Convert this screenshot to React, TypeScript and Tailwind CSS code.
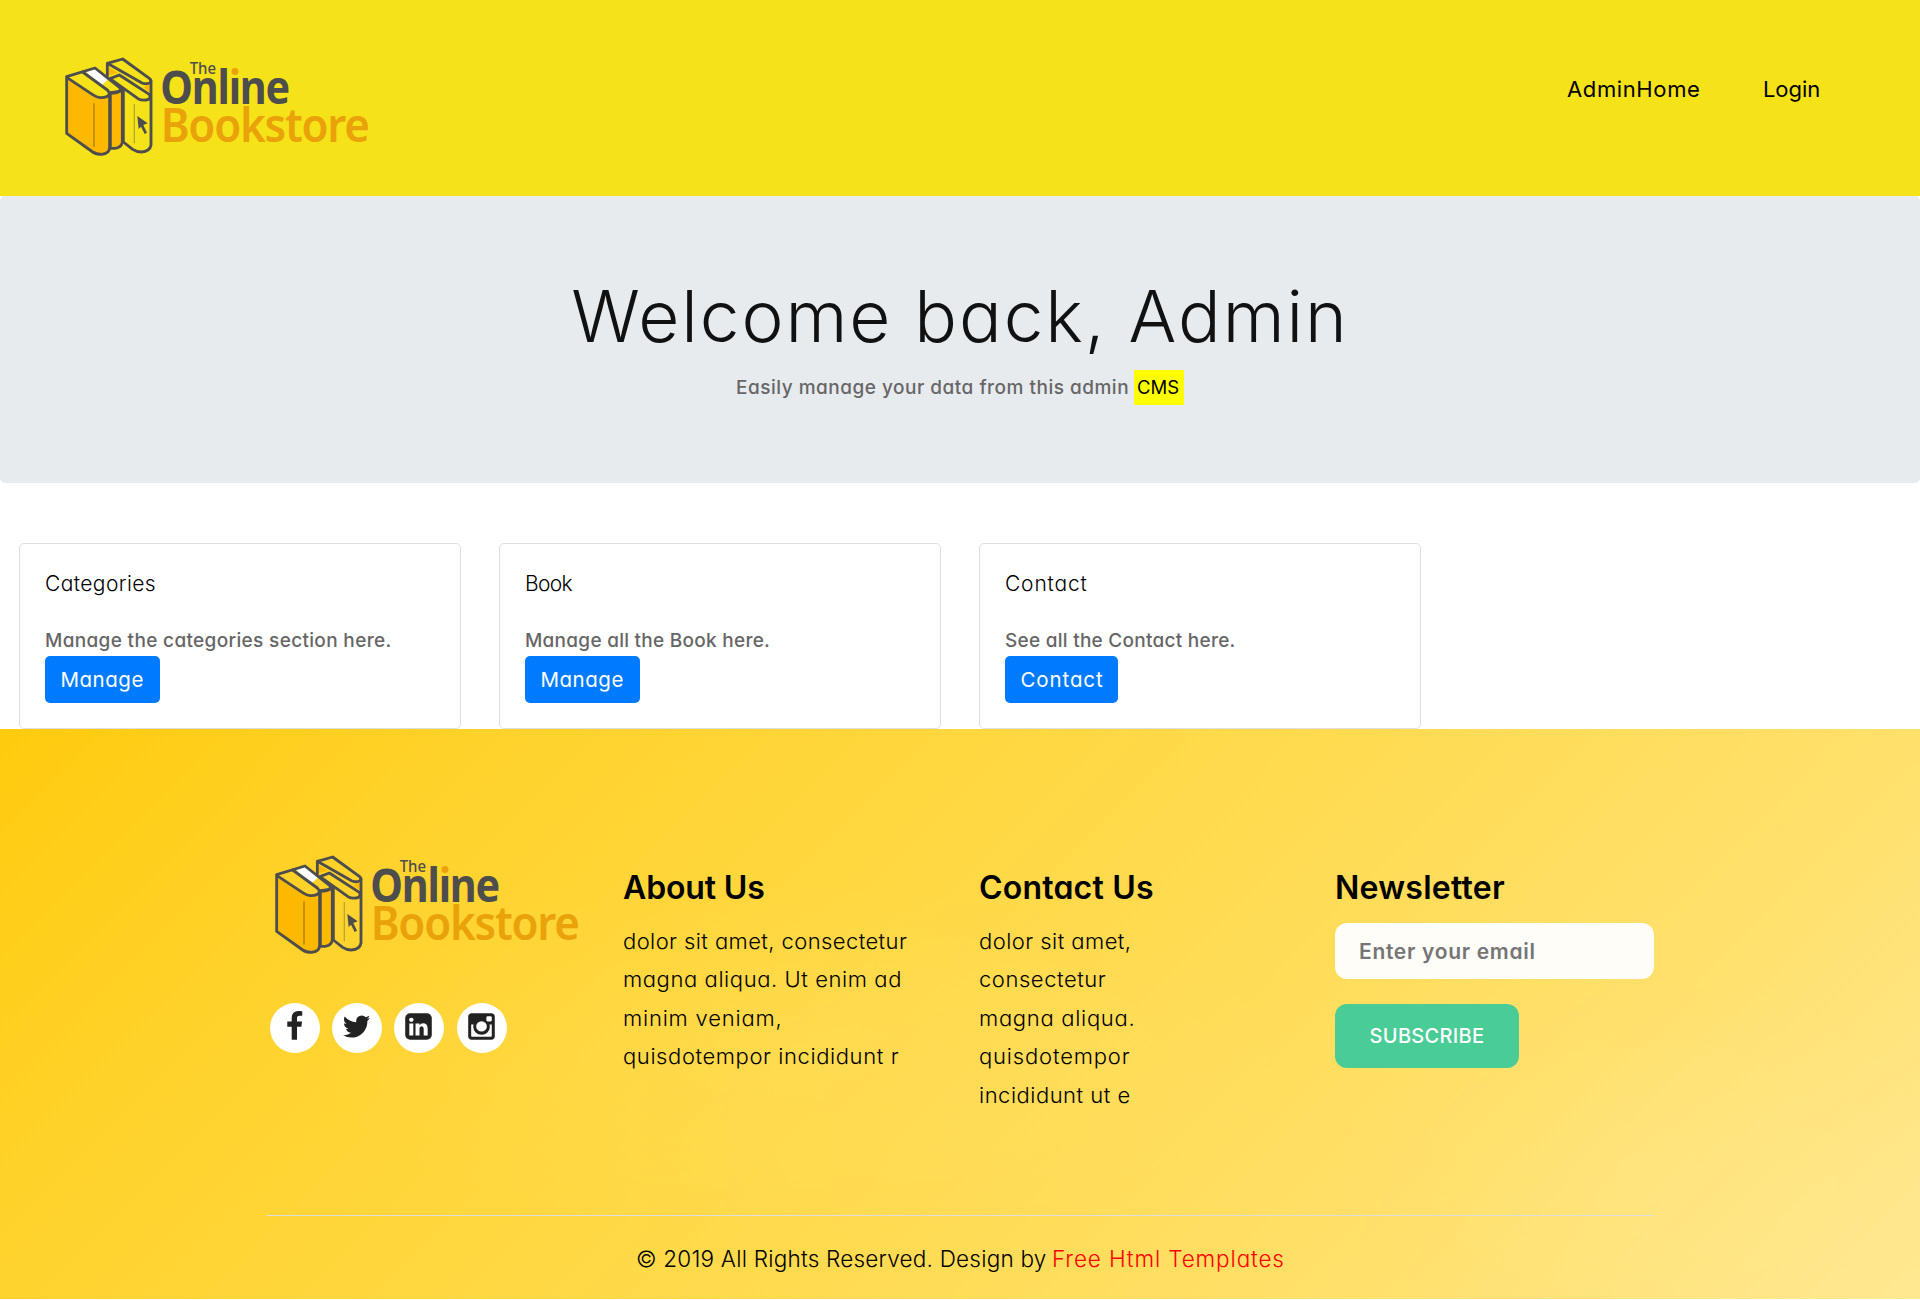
function Logo({ id }: { id: string }) {
  return (
    <svg viewBox="0 0 1020 390" className="block h-[130px] w-[340px]" aria-label="The Online Bookstore">
      <defs>
        <linearGradient id={id} gradientUnits="userSpaceOnUse" x1="0" y1="80" x2="0" y2="200">
          <stop offset="0.24" stopColor="#eaa20a" />
          <stop offset="0.24" stopColor="#4d4d4d" />
        </linearGradient>
      </defs>
      <g stroke="#4d4d4d" strokeWidth="8.5" strokeLinejoin="round" strokeLinecap="round" fill="none">
        <path d="M50 112V280L128 336Q138 343 155 343Q178 341 179 322V162Q172 174 150 173Q140 172 128 164Z" fill="#fdb900" />
        <path d="M181 160V325H195Q212 324 217 308V150Q205 160 181 160Z" fill="#fdb900" />
        <path d="M107 94L137 87L176 117L152 138Z" fill="#fff" stroke="none" />
        <path d="M50 110L135 84L213 146Q212 156 180 158" />
        <path d="M98 96L172 150Q180 158 178 166" />
        <path d="M176 80L204 98L176 106Z" fill="#fdb900" stroke="none" />
        <path d="M172 108V70L218 57L298 115Q306 122 300 128Q290 134 276 129L172 70" />
        <path d="M280 142L300 132V156Z" fill="#fdb900" stroke="none" />
        <path d="M180 116L208 105L298 163Q304 172 296 178Q278 184 264 176L180 116" />
        <path d="M303 122V315Q300 334 274 336Q260 336 248 328L220 306V152" />
      </g>
      <path d="M132 190V320" stroke="#8c6d14" strokeWidth="3" />
      <path d="M253 192V310" stroke="#b5a832" strokeWidth="4" />
      <path d="M262 228L293 250L280 255L291 278L284 282L273 260L266 267Z" fill="#4d4d4d" />
      <g fontFamily="'Noto Sans', sans-serif">
        <text x="419" y="101" fontSize="46" fontWeight="500" fill="#4d4d4d" textLength="79" lengthAdjust="spacingAndGlyphs">The</text>
        <text x="331" y="193" fontSize="139" fontWeight="700" fill="#4d4d4d" letterSpacing="-4" textLength="386" lengthAdjust="spacingAndGlyphs">
          Onl<tspan fill={`url(#${id})`}>i</tspan>ne
        </text>
        <text x="332" y="307" fontSize="139" fontWeight="600" fill="#eaa20a" letterSpacing="-4" textLength="624" lengthAdjust="spacingAndGlyphs">Bookstore</text>
      </g>
    </svg>
  );
}

const socials = [
  { name: "Facebook", d: "M1343 12v264h-157q-86 0-116 36t-30 108v189h293l-39 296h-254v759h-306v-759h-255v-296h255v-218q0-186 104-288.500t277-102.500q147 0 228 12z", shift: "" },
  { name: "Twitter", d: "M1684 408q-67 98-162 167 1 14 1 42 0 130-38 259.500t-115.500 248.500-184.500 210.500-258 146-323 54.500q-271 0-496-145 35 4 78 4 225 0 401-138-105-2-188-64.500t-114-159.500q33 5 61 5 43 0 85-11-112-23-185.500-111.500t-73.500-205.500v-4q68 38 146 41-66-44-105-115t-39-154q0-88 44-163 121 149 294.500 238.500t371.500 99.500q-8-38-8-74 0-134 94.500-228.500t228.500-94.500q140 0 236 102 109-21 205-78-37 115-142 178 93-10 186-50z", shift: "" },
  { name: "LinkedIn", d: "M365 1414h231v-694h-231v694zm246-908q-1-52-36-86t-93-34-94.500 34-36.500 86q0 51 35.500 85.500t92.500 34.500h1q59 0 95-34.500t36-85.500zm585 908h231v-398q0-154-73-233t-193-79q-136 0-209 117h2v-101h-231q3 66 0 694h231v-388q0-38 7-56 15-35 45-59.500t74-24.500q116 0 116 157v371zm468-998v960q0 119-84.500 203.500t-203.500 84.500h-960q-119 0-203.500-84.500t-84.500-203.500v-960q0-119 84.500-203.500t203.500-84.500h960q119 0 203.500 84.500t84.500 203.500z", shift: "" },
  { name: "Instagram", d: "M1490 1426v-648h-135q20 63 20 131 0 126-64 232.500t-174 168.500-240 62q-197 0-337-135.500t-140-327.500q0-68 20-131h-141v648q0 26 17.500 43.500t43.500 17.500h1069q25 0 43-17.500t18-43.500zm-284-533q0-124-90.500-211.500t-218.500-87.500q-127 0-217.500 87.500t-90.500 211.500 90.500 211.500 217.500 87.500q128 0 218.500-87.500t90.500-211.500zm284-360v-165q0-28-20-48.500t-49-20.500h-174q-29 0-49 20.500t-20 48.500v165q0 29 20 49t49 20h174q29 0 49-20t20-49zm174-208v1142q0 81-58 139t-139 58h-1142q-81 0-139-58t-58-139v-1142q0-81 58-139t139-58h1142q81 0 139 58t58 139z", shift: "ml-px" },
];

const cards = [
  { title: "Categories", titleCls: "tracking-[0.41px]", text: "Manage the categories section here.", textCls: "tracking-[0.338px]", button: "Manage", buttonCls: "w-[115px] tracking-[0.52px]" },
  { title: "Book", titleCls: "tracking-[-0.7px]", text: "Manage all the Book here.", textCls: "tracking-[0.27px]", button: "Manage", buttonCls: "w-[115px] tracking-[0.52px]" },
  { title: "Contact", titleCls: "tracking-[0.82px]", text: "See all the Contact here.", textCls: "tracking-[0.264px]", button: "Contact", buttonCls: "w-[113px] tracking-[0.88px]" },
];

const about = [
  { text: "dolor sit amet, consectetur", cls: "tracking-[0.41px]" },
  { text: "magna aliqua. Ut enim ad", cls: "tracking-[0.58px]" },
  { text: "minim veniam,", cls: "tracking-[0.8px]" },
  { text: "quisdotempor incididunt r", cls: "tracking-[0.59px]" },
];

const contact = [
  { text: "dolor sit amet,", cls: "tracking-[0.45px]" },
  { text: "consectetur", cls: "tracking-[0.55px]" },
  { text: "magna aliqua.", cls: "tracking-[0.7px]" },
  { text: "quisdotempor", cls: "tracking-[0.83px]" },
  { text: "incididunt ut e", cls: "tracking-[0.5px]" },
];

function Lines({ lines }: { lines: { text: string; cls: string }[] }) {
  return (
    <div className="mt-[14px] text-[22px] leading-[38.4px] font-light whitespace-nowrap">
      {lines.map((l) => (
        <div key={l.text} className={l.cls}>{l.text}</div>
      ))}
    </div>
  );
}

export default function App() {
  return (
    <div className="h-[1300px] w-[1920px] overflow-hidden bg-white font-['Inter',sans-serif] text-black [font-feature-settings:'cv11']">
      <header className="flex h-[196px] items-start justify-between bg-[#f5e218] pl-[50px]">
        <div className="pt-10"><Logo id="dot-header" /></div>
        <nav className="flex pt-[73px] text-[22px] leading-8 whitespace-nowrap">
          <a className="w-[196px] tracking-[0.625px]">AdminHome</a>
          <a className="w-[157px] tracking-[-0.07px]">Login</a>
        </nav>
      </header>

      <section className="h-[287px] rounded-[5px] bg-[#e8ebee] pt-[78px]">
        <h1 className="text-center text-[71px] leading-[84px] font-light tracking-[1.93px] text-[#111]">Welcome back, Admin</h1>
        <p className="mt-[12px] flex justify-center text-[19px] leading-[35px] font-medium whitespace-nowrap text-[#666]">
          <span className="w-[398px] tracking-[0.5px]">Easily manage your data from this admin</span>
          <span className="h-[35px] w-[50px] bg-[#ffff00] pl-[3px] text-[18.5px] font-normal text-black">CMS</span>
        </p>
      </section>

      <section className="mt-[60px] flex gap-[38px] pl-[19px]">
        {cards.map((c) => (
          <article key={c.title} className="h-[186px] w-[442px] rounded-[5px] border border-black/[.125] px-[25px] pt-6">
            <h2 className={`text-[21px] leading-8 font-light ${c.titleCls}`}>{c.title}</h2>
            <p className={`mt-[26px] text-[19px] leading-[29px] font-medium text-[#666] ${c.textCls}`}>{c.text}</p>
            <button className={`mt-px block h-[47px] rounded-[5px] bg-[#007bff] pl-[15.5px] text-left text-[20.5px] leading-[47px] text-white ${c.buttonCls}`}>{c.button}</button>
          </article>
        ))}
      </section>

      <footer className="h-[570px] bg-[radial-gradient(ellipse_320px_200px_at_1640px_440px,rgba(255,255,255,0.05),transparent),radial-gradient(ellipse_500px_180px_at_800px_330px,rgba(255,255,255,0.05),transparent),linear-gradient(135deg,#ffcb0e_0%,#ffd22a_19%,#ffd842_42%,#ffe06b_77%,#ffe891_100%)] px-[266px] pt-[109px]">
        <div className="grid h-[378px] grid-cols-[357px_356px_356px_319px] border-b border-[#dedede]">
          <div>
            <div className="-ml-[6px]"><Logo id="dot-footer" /></div>
            <div className="mt-[35px] flex gap-3 pl-1">
              {socials.map((s) => (
                <a key={s.name} aria-label={s.name} className={`flex size-[50px] items-center justify-center rounded-full bg-white pr-px pb-[3px] ${s.shift}`}>
                  <svg viewBox="0 0 1792 1792" className="size-[31px] fill-[#222]"><path d={s.d} /></svg>
                </a>
              ))}
            </div>
          </div>
          <div className="pt-[30px]">
            <h3 className="text-[32px] leading-10 font-semibold tracking-[-0.14px]">About Us</h3>
            <Lines lines={about} />
          </div>
          <div className="pt-[30px]">
            <h3 className="text-[32px] leading-10 font-semibold tracking-[0.2px]">Contact Us</h3>
            <Lines lines={contact} />
          </div>
          <div className="pt-[30px]">
            <h3 className="text-[32px] leading-10 font-semibold tracking-[0.25px]">Newsletter</h3>
            <input
              type="email"
              placeholder="Enter your email"
              className="mt-[15px] block h-14 w-full rounded-xl bg-[#fffdf8] pt-px pl-6 text-[21px] font-semibold tracking-[0.7px] placeholder:text-[#757575]"
            />
            <button className="mt-[25px] block h-16 w-[184px] rounded-xl bg-[#49cc95] text-[20px] font-medium tracking-[0.3px] text-white">SUBSCRIBE</button>
          </div>
        </div>
        <p className="flex pt-[26px] pl-[370px] text-[22.5px] leading-[34px] font-light whitespace-nowrap">
          <span className="w-[416px] tracking-[0.22px]">© 2019 All Rights Reserved. Design by</span>
          <a className="tracking-[0.87px] text-[#ff0000]">Free Html Templates</a>
        </p>
      </footer>
    </div>
  );
}
